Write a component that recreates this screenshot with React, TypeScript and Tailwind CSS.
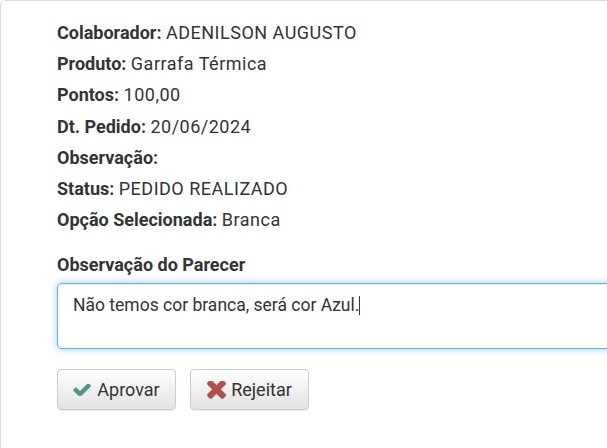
const rows: [string, string][] = [
  ["Colaborador:", "ADENILSON AUGUSTO"],
  ["Produto:", "Garrafa Térmica"],
  ["Pontos:", "100,00"],
  ["Dt. Pedido:", "20/06/2024"],
  ["Observação:", ""],
  ["Status:", "PEDIDO REALIZADO"],
  ["Opção Selecionada:", "Branca"],
];

function CheckIcon() {
  return (
    <svg viewBox="100 420 1580 1020" className="h-[12px] w-[18px] fill-[#4f9a86]">
      <path d="M1671 566q0 40-28 68l-724 724-136 136q-28 28-68 28t-68-28l-136-136-362-362q-28-28-28-68t28-68l136-136q28-28 68-28t68 28l294 295 656-657q28-28 68-28t68 28l136 136q28 28 28 68z" />
    </svg>
  );
}

function TimesIcon() {
  return (
    <svg viewBox="300 450 1190 1100" className="h-[18px] w-[19px] fill-[#b3504d]">
      <path d="M1490 1322q0 40-28 68l-136 136q-28 28-68 28t-68-28l-294-294-294 294q-28 28-68 28t-68-28l-136-136q-28-28-28-68t28-68l294-294-294-294q-28-28-28-68t28-68l136-136q28-28 68-28t68 28l294 294 294-294q28-28 68-28t68 28l136 136q28 28 28 68t-28 68l-294 294 294 294q28 28 28 68z" />
    </svg>
  );
}

export default function App() {
  return (
    <div
      className="h-[448px] w-[607px] overflow-hidden bg-white text-[#333]"
      style={{ fontFamily: "Roboto, 'Liberation Sans', sans-serif" }}
    >
      <div className="w-[720px] h-[470px] rounded-md border border-[#dcdcdc] bg-white pl-[56px] pt-[16px]">
        {/* Detalhes */}
        <div className="flex flex-col">
          {rows.map(([label, value]) => (
            <div key={label} className="text-[18px] leading-[31.2px]">
              <span className="font-bold">{label}</span>{" "}
              <span className="tracking-[0.5px]">{value}</span>
            </div>
          ))}
        </div>

        {/* Parecer */}
        <div className="mt-[20px] w-[620px]">
          <label className="block text-[18px] font-bold leading-[20px] mb-[8px]">
            Observação do Parecer
          </label>
          <div className="h-[66px] rounded-[4px] border border-[#66afe9] px-[15px] pt-[10px] text-[17.5px] leading-[22px] shadow-[inset_0_1px_1px_rgba(0,0,0,0.075),0_0_8px_rgba(102,175,233,0.6)]">
            Não temos cor branca, será cor Azul.
            <span className="inline-block w-px h-[19px] bg-[#333] align-[-4px]" />
          </div>
        </div>

        {/* Ações */}
        <div className="mt-[20px] flex gap-[14px]">
          <button className="flex h-[41px] w-[119px] items-center justify-center gap-[6px] rounded-[4px] border border-[#ccc] bg-gradient-to-b from-white to-[#e2e2e2] text-[18px] text-[#333] shadow-[0_1px_1px_rgba(0,0,0,0.08)]">
            <CheckIcon />
            Aprovar
          </button>
          <button className="flex h-[41px] w-[119px] items-center justify-center gap-[5px] rounded-[4px] border border-[#ccc] bg-gradient-to-b from-white to-[#e2e2e2] text-[18px] text-[#333] shadow-[0_1px_1px_rgba(0,0,0,0.08)]">
            <TimesIcon />
            Rejeitar
          </button>
        </div>
      </div>
    </div>
  );
}
